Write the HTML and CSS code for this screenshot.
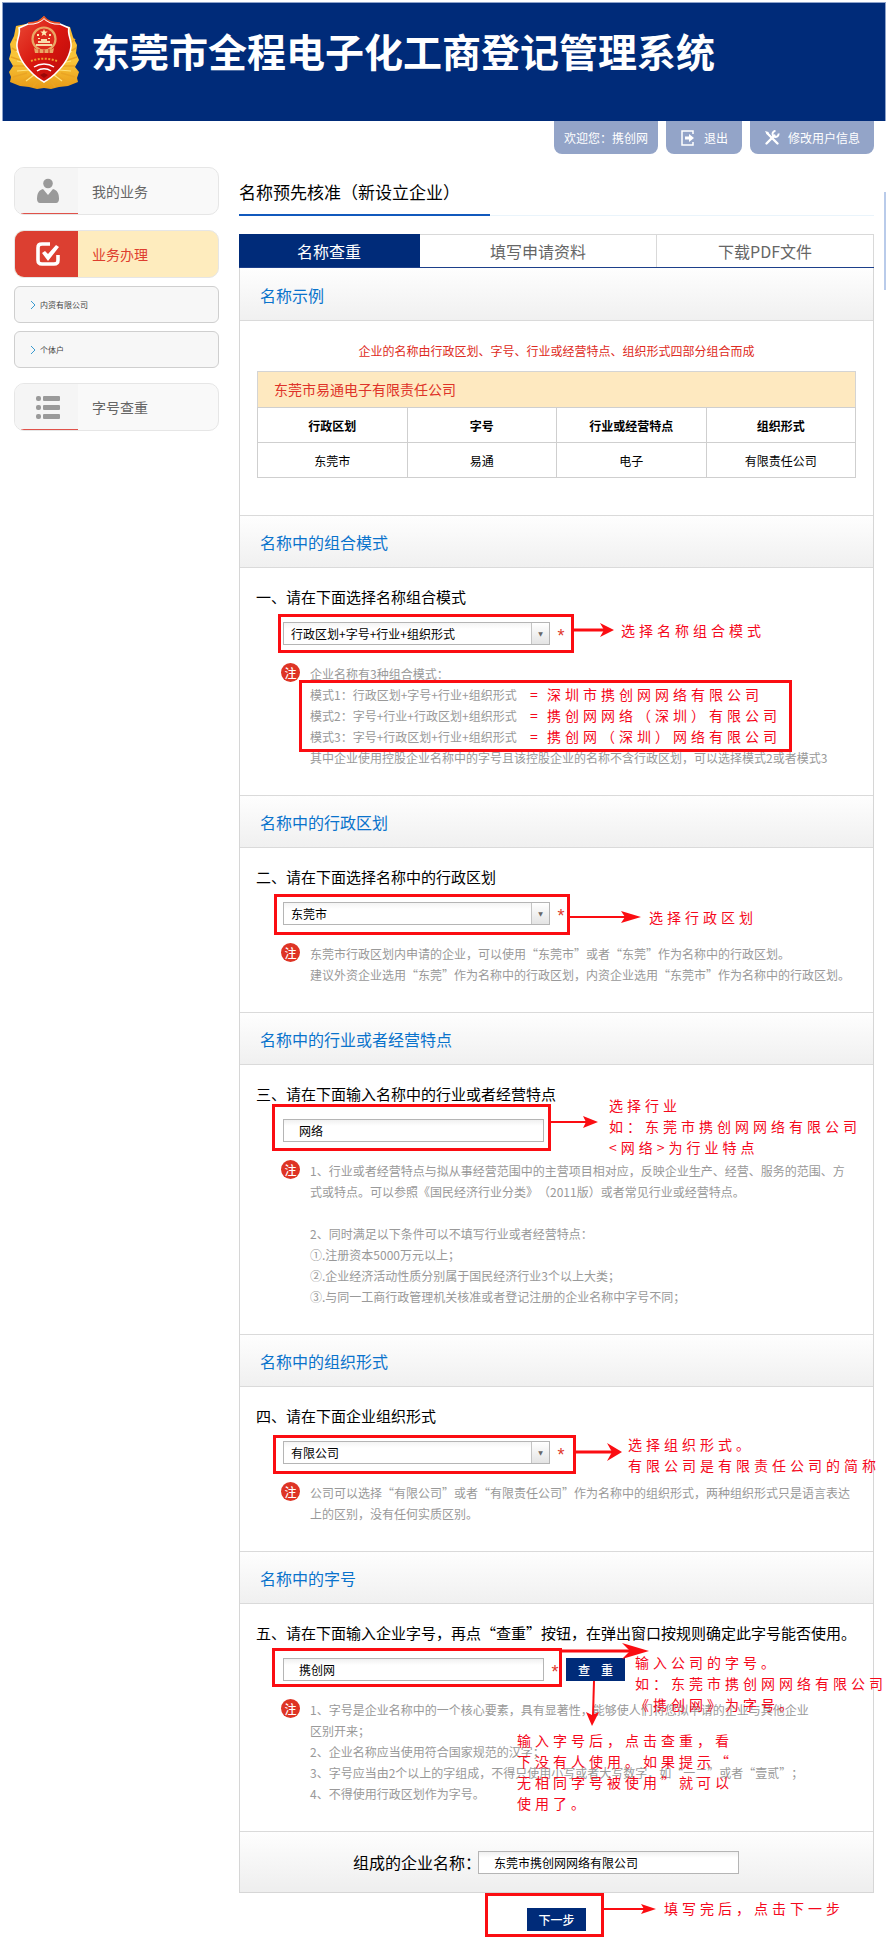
FILE: index.html
```html
<!DOCTYPE html>
<html lang="zh-CN">
<head>
<meta charset="utf-8">
<title>东莞市全程电子化工商登记管理系统</title>
<link rel="stylesheet" href="styles.css">
</head>
<body>
<header class="banner">
  <svg class="emblem" viewBox="0 0 70 74" aria-hidden="true">
    <defs>
      <linearGradient id="gold" x1="0" y1="0" x2="0" y2="1"><stop offset="0" stop-color="#f6b52c"/><stop offset=".6" stop-color="#f9c63a"/><stop offset="1" stop-color="#e89a16"/></linearGradient>
      <linearGradient id="red" x1="0" y1="0" x2="1" y2="1"><stop offset="0" stop-color="#ea4a35"/><stop offset=".5" stop-color="#d8160f"/><stop offset="1" stop-color="#b80a0a"/></linearGradient>
    </defs>
    <path d="M35 1l5 6 12 3 9 2 3 10 4 8-1 8 3 7-4 7 4 5-2 6 1 4-10 4-9 1-8 2-7-1-7 1-8-2-9-1-10-4 1-5-2-5 4-6-4-7 2-7-1-8 4-8 2-10 10-2 12-3z" fill="url(#gold)"/>
    <path d="M6 24l6 6M3 33l10 6M2 42l12 4M4 51l14 0M66 24l-6 6M67 33l-10 6M68 42l-12 4M66 51l-14 0M4 62l14-4M10 68l12-7M24 72l6-8M66 62l-14-4M60 68l-12-7M46 72l-6-8" stroke="#eaa424" stroke-width="1.5" fill="none"/>
    <path d="M9 26l4 6M7 36l7 5M8 46l9 2M8 56l12-1M61 26l-4 6M63 36l-7 5M62 46l-9 2M62 56l-12-1M17 66l8-6M53 66l-8-6" stroke="#ffe27a" stroke-width="1.2" fill="none"/>
    <path d="M35 3c3 4 9 6 16 6l9 4c-2 6 3 12 2 19-2 13-10 21-16 27-4 4-8 6-11 8-3-2-7-4-11-8-6-6-14-14-16-27-1-7 4-13 2-19l9-4c7 0 13-2 16-6z" fill="url(#red)" stroke="#fff" stroke-width="1.6"/>
    <path d="M19 8c7 0 13-2 16-6 3 4 9 6 16 6" fill="none" stroke="#e84a20" stroke-width="1.5"/>
    <circle cx="35" cy="24" r="11.5" fill="#dd2a1c" stroke="#e9a765" stroke-width="2.2"/>
    <path d="M35 14l1 2.600 2.800 0-2.200 1.700.8 2.700-2.400-1.600-2.400 1.600.8-2.700-2.200-1.700 2.800 0z" fill="#ffe9b0"/>
    <path d="M28 19h2v2h-2zM40 19h2v2h-2zM29 23h2v1h-2zM39 23h2v1h-2z" fill="#ffe9b0"/>
    <path d="M29 28h12v-2h-3v-2h-6v2h-3zM27 29h16v2H27z" fill="#f8d8a8"/>
    <path d="M25 33c4 3 16 3 20 0l-1 5H26z" fill="#e9a765"/>
    <path d="M30 34v4M35 35v4M40 34v4" stroke="#d31a12" stroke-width="1"/>
    <path d="M22 46c8-3 18-3 26 0" fill="none" stroke="#efa030" stroke-width="2" stroke-dasharray="2 1.500"/>
    <path d="M25 52c6-4 14-4 20 0M28 56c4-3 10-3 14 0" fill="none" stroke="#fff" stroke-width="1.500"/>
    <path d="M31 60l4-2 4 2-4 3z" fill="#9a0808"/>
  </svg>
  <h1 class="banner-title">东莞市全程电子化工商登记管理系统</h1>
</header>

<nav class="userbar" aria-label="用户">
  <span class="usertab">欢迎您：携创网</span>
  <a class="usertab" href="#logout">
    <svg width="16" height="16" viewBox="0 0 16 16" aria-hidden="true"><path d="M13 4V1H2v14h11v-3" fill="none" stroke="#fff" stroke-width="1.500"/><path d="M5 6.500h4V4l5 4-5 4V9.500H5z" fill="#fff"/></svg>
    退出
  </a>
  <a class="usertab" href="#profile">
    <svg width="16" height="16" viewBox="0 0 16 16" aria-hidden="true"><path d="M3.500 3.500l10 10" stroke="#fff" stroke-width="2.400" stroke-linecap="round"/><path d="M1 1l3.500 1L5 4.500 2.500 4z" fill="#fff"/><path d="M2.500 13.500l8-8" stroke="#fff" stroke-width="2.400" stroke-linecap="round"/><path d="M14.500 3.500a3 3 0 1 1-3-2.600" fill="none" stroke="#fff" stroke-width="2"/></svg>
    修改用户信息
  </a>
</nav>

<div class="page">
  <nav class="sidebar" aria-label="业务">
    <a class="menu" href="#mine">
      <span class="menu-icon"><svg width="24" height="26" viewBox="0 0 24 26" aria-hidden="true"><circle cx="12" cy="5.500" r="4.800" fill="#9a9a9a"/><path d="M7 11l5 6 5-6c4 1 6 4 6 10 0 2-1 4-3 4H4c-2 0-3-2-3-4 0-6 2-9 6-10z" fill="#9a9a9a"/></svg></span>
      <span class="menu-text">我的业务</span>
    </a>
    <a class="menu menu-active" href="#handle">
      <span class="menu-icon"><svg width="26" height="26" viewBox="0 0 26 26" aria-hidden="true"><path d="M15 3H7C4 3 3 4 3 7v12c0 3 1 4 4 4h12c3 0 4-1 4-4v-5" fill="none" stroke="#fff" stroke-width="3.600"/><path d="M7 12l3-2 3 3 8-9 3 2-11 14z" fill="#fff"/></svg></span>
      <span class="menu-text">业务办理</span>
    </a>
    <a class="submenu" href="#domestic"><svg width="6" height="8" viewBox="0 0 6 8" aria-hidden="true"><path d="M1 0l4 4-4 4" fill="none" stroke="#3a9bd0"/></svg>内资有限公司</a>
    <a class="submenu" href="#individual"><svg width="6" height="8" viewBox="0 0 6 8" aria-hidden="true"><path d="M1 0l4 4-4 4" fill="none" stroke="#3a9bd0"/></svg>个体户</a>
    <a class="menu menu-last" href="#check">
      <span class="menu-icon"><svg width="26" height="24" viewBox="0 0 26 24" fill="#9a9a9a" aria-hidden="true"><rect x="1" y="1" width="5" height="5" rx="2"/><rect x="8" y="1" width="17" height="5" rx="1"/><rect x="1" y="10" width="5" height="5" rx="2"/><rect x="8" y="10" width="17" height="5" rx="1"/><rect x="1" y="19" width="5" height="5" rx="2"/><rect x="8" y="19" width="17" height="5" rx="1"/></svg></span>
      <span class="menu-text">字号查重</span>
    </a>
  </nav>

  <main class="main">
    <div class="titlebar"><h2 class="title">名称预先核准（新设立企业）</h2></div>
    <nav class="tabs" aria-label="步骤">
      <a class="tab tab-active" href="#s1">名称查重</a>
      <a class="tab tab-mid" href="#s2">填写申请资料</a>
      <a class="tab" href="#s3">下载PDF文件</a>
    </nav>

    <form class="panel">
      <h3 class="head head-first">名称示例</h3>
      <div class="example">
        <p class="lead">企业的名称由行政区划、字号、行业或经营特点、组织形式四部分组合而成</p>
        <table class="sample">
          <caption>东莞市易通电子有限责任公司</caption>
          <thead><tr><th>行政区划</th><th>字号</th><th>行业或经营特点</th><th>组织形式</th></tr></thead>
          <tbody><tr><td>东莞市</td><td>易通</td><td>电子</td><td>有限责任公司</td></tr></tbody>
        </table>
      </div>

      <h3 class="head">名称中的组合模式</h3>
      <section class="part">
        <label class="ask" for="mode">一、请在下面选择名称组合模式</label>
        <div class="control"><span class="picker"><select id="mode"><option>行政区划+字号+行业+组织形式</option></select></span><span class="star">*</span></div>
        <div class="note"><span class="badge">注</span><p>企业名称有3种组合模式：<br>模式1：行政区划+字号+行业+组织形式<br>模式2：字号+行业+行政区划+组织形式<br>模式3：字号+行政区划+行业+组织形式<br>其中企业使用控股企业名称中的字号且该控股企业的名称不含行政区划，可以选择模式2或者模式3</p></div>
        <svg class="marks" aria-hidden="true"><rect x="39.500" y="47.500" width="293" height="36"/><rect x="60.500" y="113.500" width="490" height="69"/><path d="M333 62h32" stroke-width="3"/><path class="tip" d="M374 62l-14-7 4 7-4 7z"/></svg>
        <p class="hint hint-mode">选择名称组合模式</p>
        <div class="hint hint-formula"><span>=</span><span>深圳市携创网网络有限公司</span><span>=</span><span>携创网网络（深圳）有限公司</span><span>=</span><span>携创网（深圳）网络有限公司</span></div>
      </section>

      <h3 class="head">名称中的行政区划</h3>
      <section class="part">
        <label class="ask" for="area">二、请在下面选择名称中的行政区划</label>
        <div class="control"><span class="picker"><select id="area"><option>东莞市</option></select></span><span class="star">*</span></div>
        <div class="note"><span class="badge">注</span><p>东莞市行政区划内申请的企业，可以使用“东莞市”或者“东莞”作为名称中的行政区划。<br>建议外资企业选用“东莞”作为名称中的行政区划，内资企业选用“东莞市”作为名称中的行政区划。</p></div>
        <svg class="marks" aria-hidden="true"><rect x="35.500" y="47.500" width="293" height="38"/><path d="M330 69h56" stroke-width="2"/><path class="tip" d="M401 69l-20-6 4 6-4 6z"/></svg>
        <p class="hint hint-area">选择行政区划</p>
      </section>

      <h3 class="head">名称中的行业或者经营特点</h3>
      <section class="part">
        <label class="ask" for="trade">三、请在下面输入名称中的行业或者经营特点</label>
        <div class="control"><input class="box" id="trade" type="text" value="网络"></div>
        <div class="note"><span class="badge">注</span><p>1、行业或者经营特点与拟从事经营范围中的主营项目相对应，反映企业生产、经营、服务的范围、方<br>式或特点。可以参照《国民经济行业分类》（2011版）或者常见行业或经营特点。<br><br>2、同时满足以下条件可以不填写行业或者经营特点：<br>①.注册资本5000万元以上；<br>②.企业经济活动性质分别属于国民经济行业3个以上大类；<br>③.与同一工商行政管理机关核准或者登记注册的企业名称中字号不同；</p></div>
        <svg class="marks" aria-hidden="true"><rect x="33.500" y="40.500" width="276" height="44"/><path d="M311 57h36" stroke-width="2"/><path class="tip" d="M358 57l-15-6 3 6-3 6z"/></svg>
        <p class="hint hint-trade">选择行业<br>如：东莞市携创网网络有限公司<br>&lt;网络&gt;为行业特点</p>
      </section>

      <h3 class="head">名称中的组织形式</h3>
      <section class="part">
        <label class="ask" for="org">四、请在下面企业组织形式</label>
        <div class="control"><span class="picker"><select id="org"><option>有限公司</option></select></span><span class="star">*</span></div>
        <div class="note"><span class="badge">注</span><p>公司可以选择“有限公司”或者“有限责任公司”作为名称中的组织形式，两种组织形式只是语言表达<br>上的区别，没有任何实质区别。</p></div>
        <svg class="marks" aria-hidden="true"><rect x="34.500" y="49.500" width="300" height="36"/><path d="M336 65h36" stroke-width="3"/><path class="tip" d="M382 65l-15-9 5 9-5 9z"/></svg>
        <p class="hint hint-org">选择组织形式。<br>有限公司是有限责任公司的简称</p>
      </section>

      <h3 class="head">名称中的字号</h3>
      <section class="part">
        <label class="ask" for="brand">五、请在下面输入企业字号，再点“查重”按钮，在弹出窗口按规则确定此字号能否使用。</label>
        <div class="control"><input class="box" id="brand" type="text" value="携创网"><span class="star">*</span><button class="btn" type="button">查&nbsp;&nbsp;&nbsp;&nbsp;重</button></div>
        <div class="note"><span class="badge">注</span><p>1、字号是企业名称中的一个核心要素，具有显著性，能够使人们将您拟申请的企业与其他企业<br>区别开来；<br>2、企业名称应当使用符合国家规范的汉字；<br>3、字号应当由2个以上的字组成，不得只使用小写或者大写数字，如“一二”或者“壹贰”；<br>4、不得使用行政区划作为字号。</p></div>
        <svg class="marks" aria-hidden="true"><rect x="33.500" y="45.500" width="287" height="36"/><path d="M320 47h72" stroke-width="3"/><path class="tip" d="M409 47l-27-8 8 8-8 8z"/><path d="M354 77l-1 34" stroke-width="2"/><path class="tip" d="M352 122l-6-14 6 3 7-3z"/></svg>
        <p class="hint hint-brand">输入公司的字号。<br>如：东莞市携创网网络有限公司<br>《携创网》为字号。</p>
        <p class="hint hint-check">输入字号后，点击查重，看<br>下没有人使用。如果提示“<br>无相同字号被使用”就可以<br>使用了。</p>
      </section>

      <div class="result">
        <label for="full">组成的企业名称：</label>
        <input class="box" id="full" type="text" value="东莞市携创网网络有限公司">
      </div>
    </form>

    <div class="next">
      <button class="btn" type="button">下一步</button>
      <svg class="marks" aria-hidden="true"><rect x="247.500" y="1.500" width="116" height="41"/><path d="M365 16h42" stroke-width="2"/><path class="tip" d="M417 16l-15-5 3 5-3 5z"/></svg>
      <p class="hint hint-next">填写完后，点击下一步</p>
    </div>
  </main>
  <div class="rail"></div>
</div>
</body>
</html>
```
FILE: styles.css
```css
* { box-sizing: border-box; }

body {
  margin: 0;
  background: #fff;
  color: #000;
  font-family: "Noto Sans CJK SC", sans-serif;
  font-size: 12px;
  text-spacing-trim: space-all;
}

h1, h2, h3, p { margin: 0; font-weight: 400; }
a { color: inherit; text-decoration: none; }

.banner {
  display: flex;
  align-items: flex-start;
  gap: 12px;
  height: 119px;
  margin: 2px 2px 0;
  padding: 12px 6px;
  background: #002b79;
  border: 1px solid #8ea3cb;
  border-bottom: 0;
}
.emblem { flex: none; width: 70px; height: 74px; }
.banner-title {
  color: #fff;
  font-size: 39px;
  font-weight: 700;
  line-height: 46px;
  padding-top: 12px;
  white-space: nowrap;
}

.userbar {
  display: flex;
  justify-content: flex-end;
  gap: 8px;
  padding-right: 14px;
}
.usertab {
  display: flex;
  align-items: center;
  gap: 8px;
  height: 33px;
  padding: 0 14px;
  border-radius: 0 0 8px 8px;
  background: #93a4c8;
  color: #fff;
}
span.usertab { padding: 0 10px; }

.page {
  position: relative;
  display: flex;
  gap: 20px;
  padding: 0 14px;
}
.rail {
  position: absolute;
  top: 38px;
  right: 2px;
  width: 2px;
  height: 98px;
  background: #b9cbea;
}

.sidebar {
  flex: none;
  display: flex;
  flex-direction: column;
  width: 205px;
  padding-top: 13px;
}
.menu {
  display: flex;
  height: 48px;
  margin-bottom: 15px;
  border: 1px solid #e6e6e6;
  border-radius: 10px;
  background: #f9f9f9;
  color: #666;
  font-size: 14px;
  overflow: hidden;
}
.menu-icon {
  display: flex;
  align-items: center;
  justify-content: center;
  width: 63px;
  padding-left: 3px;
  background: linear-gradient(#e0524a, #e0524a) 6px 100% / 100% 1px no-repeat, #f5f5f5;
}
.menu-text { padding-left: 14px; line-height: 46px; }
.menu-active { margin-bottom: 8px; background: #feecbe; color: #de3e2e; }
.menu-active .menu-icon { background: #dc3f31; }
.menu-last { margin-top: 7px; }
.submenu {
  display: flex;
  align-items: center;
  gap: 4px;
  height: 37px;
  margin-bottom: 8px;
  padding-left: 15px;
  border: 1px solid #cfcfcf;
  border-radius: 6px;
  background: #f7f7f7;
  color: #444;
  font-size: 8px;
}

.main { flex: 1; min-width: 0; padding-top: 26px; }
.titlebar { border-bottom: 1px solid #eaf4fb; }
.title {
  width: 251px;
  margin-bottom: -1px;
  padding-bottom: 10px;
  border-bottom: 2px solid #1159bd;
  font-size: 17px;
  line-height: 24px;
  white-space: nowrap;
}

.tabs {
  display: flex;
  margin-top: 18px;
  border-bottom: 1px solid #1c3f8a;
}
.tab {
  flex: 217;
  height: 33px;
  border-top: 1px solid #d9d9d9;
  border-right: 1px solid #d9d9d9;
  color: #666;
  font-size: 16px;
  line-height: 32px;
  text-align: center;
}
.tab-mid { flex: 237; }
.tab-active { flex: 181; background: #002b79; border-color: #002b79; color: #fff; }

.panel { border: 1px solid #d6d6d6; border-top: 0; }
.head {
  height: 53px;
  padding-left: 20px;
  border: solid #dadada;
  border-width: 1px 0;
  background: linear-gradient(#fefefe, #f0f0f0);
  color: #0a73cc;
  font-size: 16px;
  line-height: 52px;
}
.head-first { border-top: 0; line-height: 54px; }

.example { padding: 19px 17px 37px; }
.lead { margin-bottom: 9px; color: #de2b22; line-height: 22px; text-align: center; }
.sample {
  width: 100%;
  border-collapse: collapse;
  table-layout: fixed;
}
.sample caption {
  height: 36px;
  padding-left: 16px;
  border: 1px solid #d4d4d4;
  border-bottom: 0;
  background: #fee9c0;
  color: #de3329;
  font-size: 14px;
  line-height: 34px;
  text-align: left;
}
.sample th, .sample td {
  height: 35px;
  padding: 0;
  border: 1px solid #cfcfcf;
  text-align: center;
}

.part { position: relative; padding: 18px 16px 27px; }
.ask {
  display: block;
  font-size: 15px;
  line-height: 22px;
  white-space: nowrap;
}
.control {
  display: flex;
  align-items: center;
  gap: 6px;
  height: 23px;
  margin: 14px 0 18px 27px;
}
.picker { position: relative; width: 267px; height: 23px; }
.picker select {
  width: 100%;
  height: 100%;
  padding: 0 24px 0 7px;
  border: 1px solid #b5b5b5;
  border-radius: 0;
  appearance: none;
  background: linear-gradient(#f4f4f4, #fff 6px);
  color: #000;
  font: inherit;
}
.picker::after {
  content: "▼";
  position: absolute;
  top: 1px;
  right: 1px;
  width: 17px;
  height: 21px;
  border-left: 1px solid #c4c4c4;
  background: linear-gradient(#fff, #e4e4e4);
  color: #666;
  font: 6px/21px "DejaVu Sans", sans-serif;
  text-align: center;
  pointer-events: none;
}
.star {
  width: 10px;
  padding-top: 6px;
  color: #e0382c;
  font-family: "Liberation Sans", sans-serif;
  font-size: 18px;
  line-height: 23px;
  text-align: center;
}
.box {
  width: 261px;
  height: 23px;
  padding: 0 15px;
  border: 1px solid #b5b5b5;
  background: linear-gradient(#f0f0f0, #fff 6px);
  color: #000;
  font: inherit;
}
.btn {
  width: 59px;
  height: 23px;
  padding: 0;
  border: 0;
  background: #002b79;
  color: #fff;
  font: inherit;
  font-weight: 500;
  line-height: 23px;
}

.note { display: flex; gap: 10px; margin-left: 25px; }
.note p { color: #999; line-height: 21px; white-space: nowrap; }
.badge {
  flex: none;
  width: 19px;
  height: 19px;
  border-radius: 50%;
  background: #de3425;
  color: #fff;
  font-size: 12px;
  font-weight: 500;
  line-height: 19px;
  text-align: center;
}

.marks {
  position: absolute;
  top: 0;
  left: 0;
  width: 100%;
  height: 100%;
  overflow: visible;
  fill: none;
  stroke: #fb0d12;
  pointer-events: none;
}
.marks rect { stroke-width: 3; }
.tip { fill: #fb0d12; stroke: none; }

.hint {
  position: absolute;
  color: #f5081c;
  font-size: 14px;
  letter-spacing: 4px;
  line-height: 21px;
  white-space: nowrap;
}
.hint-mode { top: 52px; left: 381px; }
.hint-formula {
  top: 116px;
  left: 290px;
  display: grid;
  grid-template-columns: 17px auto;
}
.hint-area { top: 59px; left: 409px; }
.hint-trade { top: 30px; left: 369px; }
.hint-org { top: 47px; left: 388px; }
.hint-brand { top: 48px; left: 395px; }
.hint-check { top: 126px; left: 277px; }
.hint-next { top: 5px; left: 425px; }

.result {
  display: flex;
  align-items: center;
  height: 61px;
  padding-left: 113px;
  border-top: 1px solid #dadada;
  background: linear-gradient(#fefefe, #eeeeee);
}
.result label { width: 125px; font-size: 16px; white-space: nowrap; }

.next {
  position: relative;
  display: flex;
  justify-content: center;
  padding: 15px 0 7px;
}
```
